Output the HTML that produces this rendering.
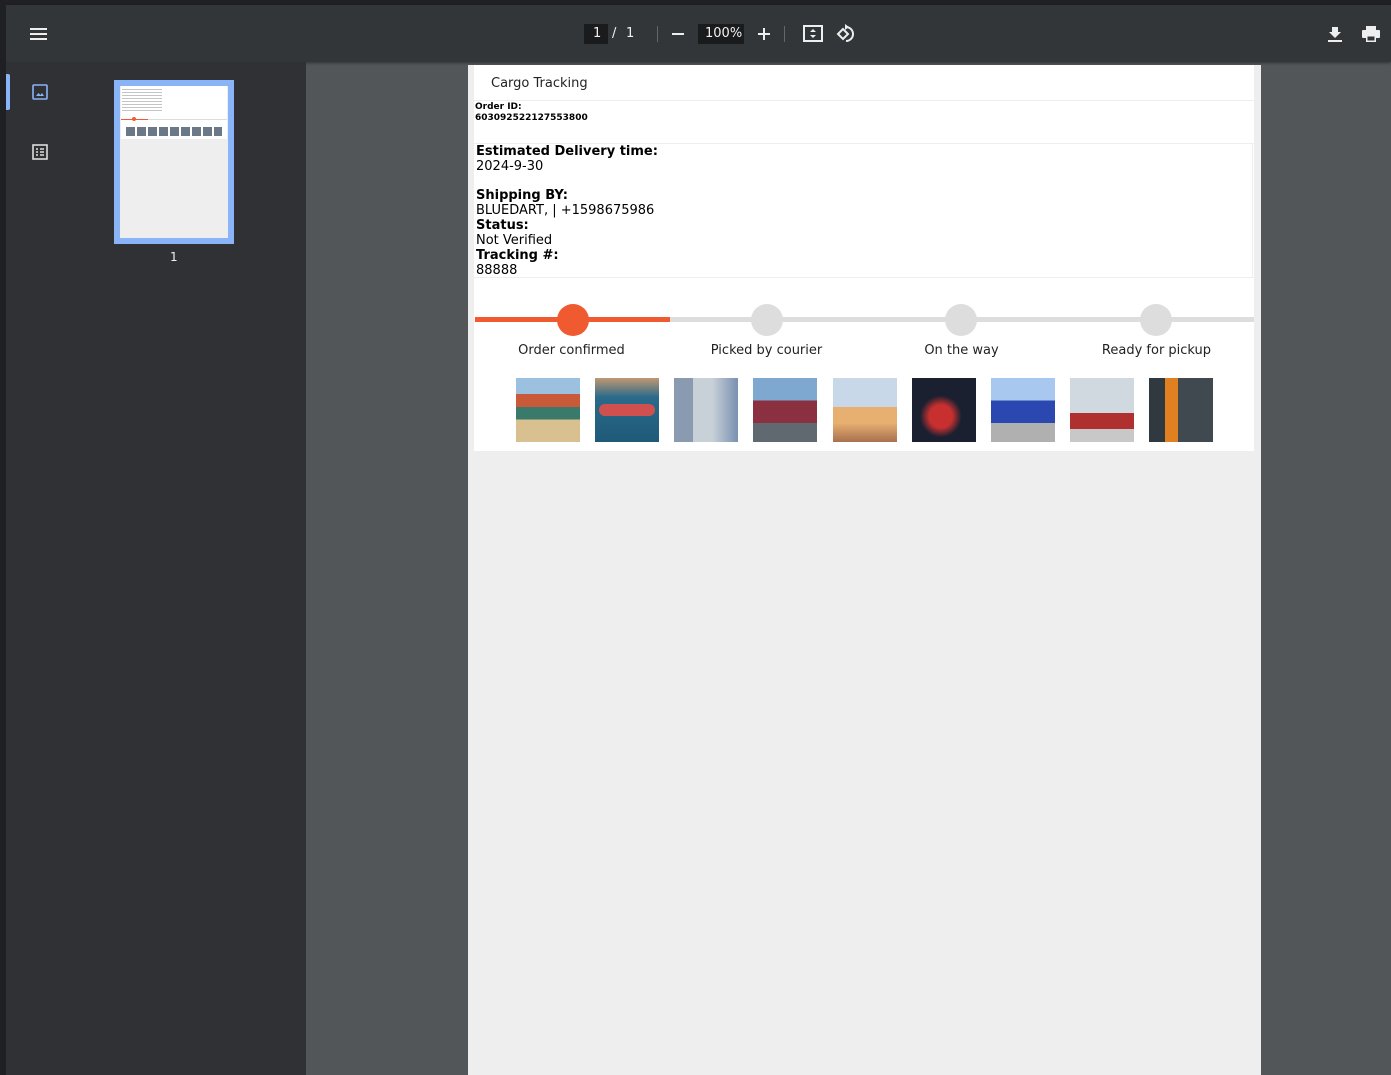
<!DOCTYPE html>
<html><head><meta charset="utf-8"><style>
*{margin:0;padding:0;box-sizing:border-box}
body{width:1391px;height:1075px;overflow:hidden;background:#525659;font-family:"DejaVu Sans","Liberation Sans",sans-serif;position:relative}
.abs{position:absolute}
#topline{left:0;top:0;width:1391px;height:5px;background:#202124}
#leftline{left:0;top:0;width:6px;height:1075px;background:#1f2023}
#toolbar{left:6px;top:5px;width:1385px;height:57px;background:#323639;box-shadow:0 1px 3px rgba(0,0,0,.4)}
#side{left:6px;top:62px;width:300px;height:1013px;background:#2f3134}
.w{color:#f1f1f1}
#page{left:468px;top:65px;width:793px;height:1010px;background:#eeeeee}
#card{left:474px;top:65px;width:780px;height:386px;background:#fff}
.b{font-weight:bold}
.t{font-size:13px;color:#000;line-height:15px}
.img{width:64px;height:64px;top:378px}
</style></head><body>
<div id="topline" class="abs"></div>
<div id="toolbar" class="abs"></div>
<div id="side" class="abs"></div>
<div id="leftline" class="abs"></div>
<div class="abs" style="left:30px;top:28px;width:17px;height:2px;background:#eee;box-shadow:0 5px 0 #eee,0 10px 0 #eee"></div>
<div class="abs" style="left:584px;top:24px;width:24px;height:20px;background:#191b1c"></div>
<div class="abs w" style="left:593px;top:26px;font-size:13px">1</div>
<div class="abs w" style="left:612px;top:26px;font-size:13px">/</div>
<div class="abs w" style="left:626px;top:26px;font-size:13px">1</div>
<div class="abs" style="left:657px;top:26px;width:1px;height:16px;background:#666"></div>
<div class="abs" style="left:672px;top:33px;width:12px;height:2px;background:#eee"></div>
<div class="abs" style="left:698px;top:24px;width:46px;height:20px;background:#191b1c"></div>
<div class="abs w" style="left:705px;top:26px;font-size:13px">100%</div>
<div class="abs" style="left:758px;top:33px;width:12px;height:2px;background:#eee"></div>
<div class="abs" style="left:763px;top:28px;width:2px;height:12px;background:#eee"></div>
<div class="abs" style="left:784px;top:26px;width:1px;height:16px;background:#666"></div>
<svg class="abs" style="left:803px;top:25px" width="20" height="18" viewBox="0 0 20 18"><rect x="1" y="1" width="18" height="15" fill="none" stroke="#eee" stroke-width="2"/><path d="M10 4l-3 3h6zM10 13l-3-3h6z" fill="#eee"/></svg>
<svg class="abs" style="left:836px;top:24px" width="20" height="20" viewBox="0 0 20 20"><path d="M7 5l-5 5 5 5 5-5z" fill="none" stroke="#eee" stroke-width="2"/><path d="M10 3a7 7 0 1 1 0 14" fill="none" stroke="#eee" stroke-width="2"/><path d="M9 0l4 3-4 3z" fill="#eee"/></svg>
<svg class="abs" style="left:1327px;top:26px" width="16" height="16" viewBox="0 0 16 16"><path d="M5 1h6v5h3l-6 6-6-6h3z" fill="#eee"/><rect x="1" y="14" width="14" height="2" fill="#eee"/></svg>
<svg class="abs" style="left:1362px;top:26px" width="18" height="16" viewBox="0 0 18 16"><rect x="4" y="0" width="10" height="4" fill="#eee"/><rect x="0" y="4" width="18" height="8" rx="1" fill="#eee"/><rect x="4" y="9" width="10" height="7" fill="#eee"/><rect x="5.5" y="10.5" width="7" height="4" fill="#323639"/></svg>
<div class="abs" style="left:6px;top:74px;width:4px;height:36px;background:#8ab4f8;border-radius:0 2px 2px 0"></div>
<svg class="abs" style="left:32px;top:84px" width="16" height="16" viewBox="0 0 16 16"><rect x="1" y="1" width="14" height="14" rx="1" fill="none" stroke="#8ab4f8" stroke-width="1.6"/><path d="M4 12l2.5-3 2 2 1.5-2 2 3z" fill="#8ab4f8"/></svg>
<svg class="abs" style="left:32px;top:144px" width="16" height="16" viewBox="0 0 16 16"><rect x="1" y="1" width="14" height="14" fill="none" stroke="#ddd" stroke-width="1.6"/><path d="M4 5h2M8 5h4M4 8h2M8 8h4M4 11h2M8 11h4" stroke="#ddd" stroke-width="1.5"/></svg>
<div class="abs" style="left:114px;top:80px;width:120px;height:164px;background:#8ab4f8"></div>
<div class="abs" style="left:120px;top:86px;width:108px;height:152px;background:#eee"></div>
<div class="abs" style="left:121px;top:86px;width:106px;height:53px;background:#fff"></div>
<div class="abs" style="left:121px;top:119px;width:27px;height:1px;background:#f05a30"></div>
<div class="abs" style="left:148px;top:119px;width:79px;height:1px;background:#ddd"></div>
<div class="abs" style="left:132px;top:117px;width:4px;height:4px;border-radius:50%;background:#f05a30"></div>
<div class="abs" style="left:126px;top:127px;width:96px;height:9px;background:repeating-linear-gradient(90deg,#6a7888 0 9px,#fff 9px 11px)"></div>
<div class="abs" style="left:122px;top:89px;width:40px;height:24px;background:repeating-linear-gradient(180deg,#aaa 0 1px,#fff 1px 3px);opacity:.7"></div>
<div class="abs w" style="left:170px;top:250px;font-size:12px">1</div>
<div id="page" class="abs"></div>
<div id="card" class="abs"></div>
<div class="abs" style="left:491px;top:76px;font-size:13px;color:#222">Cargo Tracking</div>
<div class="abs" style="left:474px;top:100px;width:780px;height:1px;background:#eee"></div>
<div class="abs" style="left:475px;top:102px;font-size:9px;line-height:11px;font-weight:bold;color:#000">Order ID:<br>603092522127553800</div>
<div class="abs" style="left:474px;top:143px;width:780px;height:1px;background:#eee"></div>
<div class="abs" style="left:1252px;top:143px;width:1px;height:134px;background:#eee"></div>
<div class="abs" style="left:474px;top:277px;width:780px;height:1px;background:#eee"></div>
<div class="abs t" style="left:476px;top:144px">
<div class="b">Estimated Delivery time:</div><div>2024-9-30</div>
<div style="height:14px"></div>
<div class="b">Shipping BY:</div><div>BLUEDART, | +1598675986</div>
<div class="b">Status:</div><div>Not Verified</div>
<div class="b">Tracking #:</div><div>88888</div>
</div>
<div class="abs" style="left:475px;top:317px;width:195px;height:5px;background:#f05a30"></div>
<div class="abs" style="left:670px;top:317px;width:584px;height:5px;background:#ddd"></div>
<div class="abs" style="left:557px;top:304px;width:32px;height:32px;border-radius:50%;background:#f05a30"></div>
<div class="abs" style="left:751px;top:304px;width:32px;height:32px;border-radius:50%;background:#ddd"></div>
<div class="abs" style="left:945px;top:304px;width:32px;height:32px;border-radius:50%;background:#ddd"></div>
<div class="abs" style="left:1140px;top:304px;width:32px;height:32px;border-radius:50%;background:#ddd"></div>
<div class="abs" style="left:474px;top:343px;width:780px;font-size:13px;color:#222;display:flex">
<div style="width:195px;text-align:center">Order confirmed</div><div style="width:195px;text-align:center">Picked by courier</div><div style="width:195px;text-align:center">On the way</div><div style="width:195px;text-align:center">Ready for pickup</div></div>
<div class="abs img" style="left:516px;background:linear-gradient(180deg,#9cc0e0 0 25%,#c85a3a 25% 45%,#3a7a6a 45% 65%,#d8c090 65%)"></div>
<div class="abs img" style="left:595px;background:linear-gradient(180deg,#c09870 0,#2a6a8a 30%,#1f5a78 100%)"><div style="margin:26px 4px;height:12px;background:#d05050;border-radius:6px"></div></div>
<div class="abs img" style="left:674px;background:linear-gradient(90deg,#8a9ab0 0 30%,#c8d0d8 30% 60%,#7890b0)"></div>
<div class="abs img" style="left:753px;background:linear-gradient(180deg,#7fa8d0 0 35%,#8a3040 35% 70%,#606870 70%)"></div>
<div class="abs img" style="left:833px;background:linear-gradient(180deg,#c8d8e8 0 45%,#e8b070 45% 70%,#a87050)"></div>
<div class="abs img" style="left:912px;background:radial-gradient(circle at 45% 60%,#c83030 0 22%,#1a2030 40%)"></div>
<div class="abs img" style="left:991px;background:linear-gradient(180deg,#a8c8f0 0 35%,#2a48b0 35% 70%,#b0b0b0 70%)"></div>
<div class="abs img" style="left:1070px;background:linear-gradient(180deg,#d0d8e0 0 55%,#b03030 55% 80%,#c8c8c8 80%)"></div>
<div class="abs img" style="left:1149px;background:linear-gradient(90deg,#303840 0 25%,#e08020 25% 45%,#404850 45%)"></div>
</body></html>
